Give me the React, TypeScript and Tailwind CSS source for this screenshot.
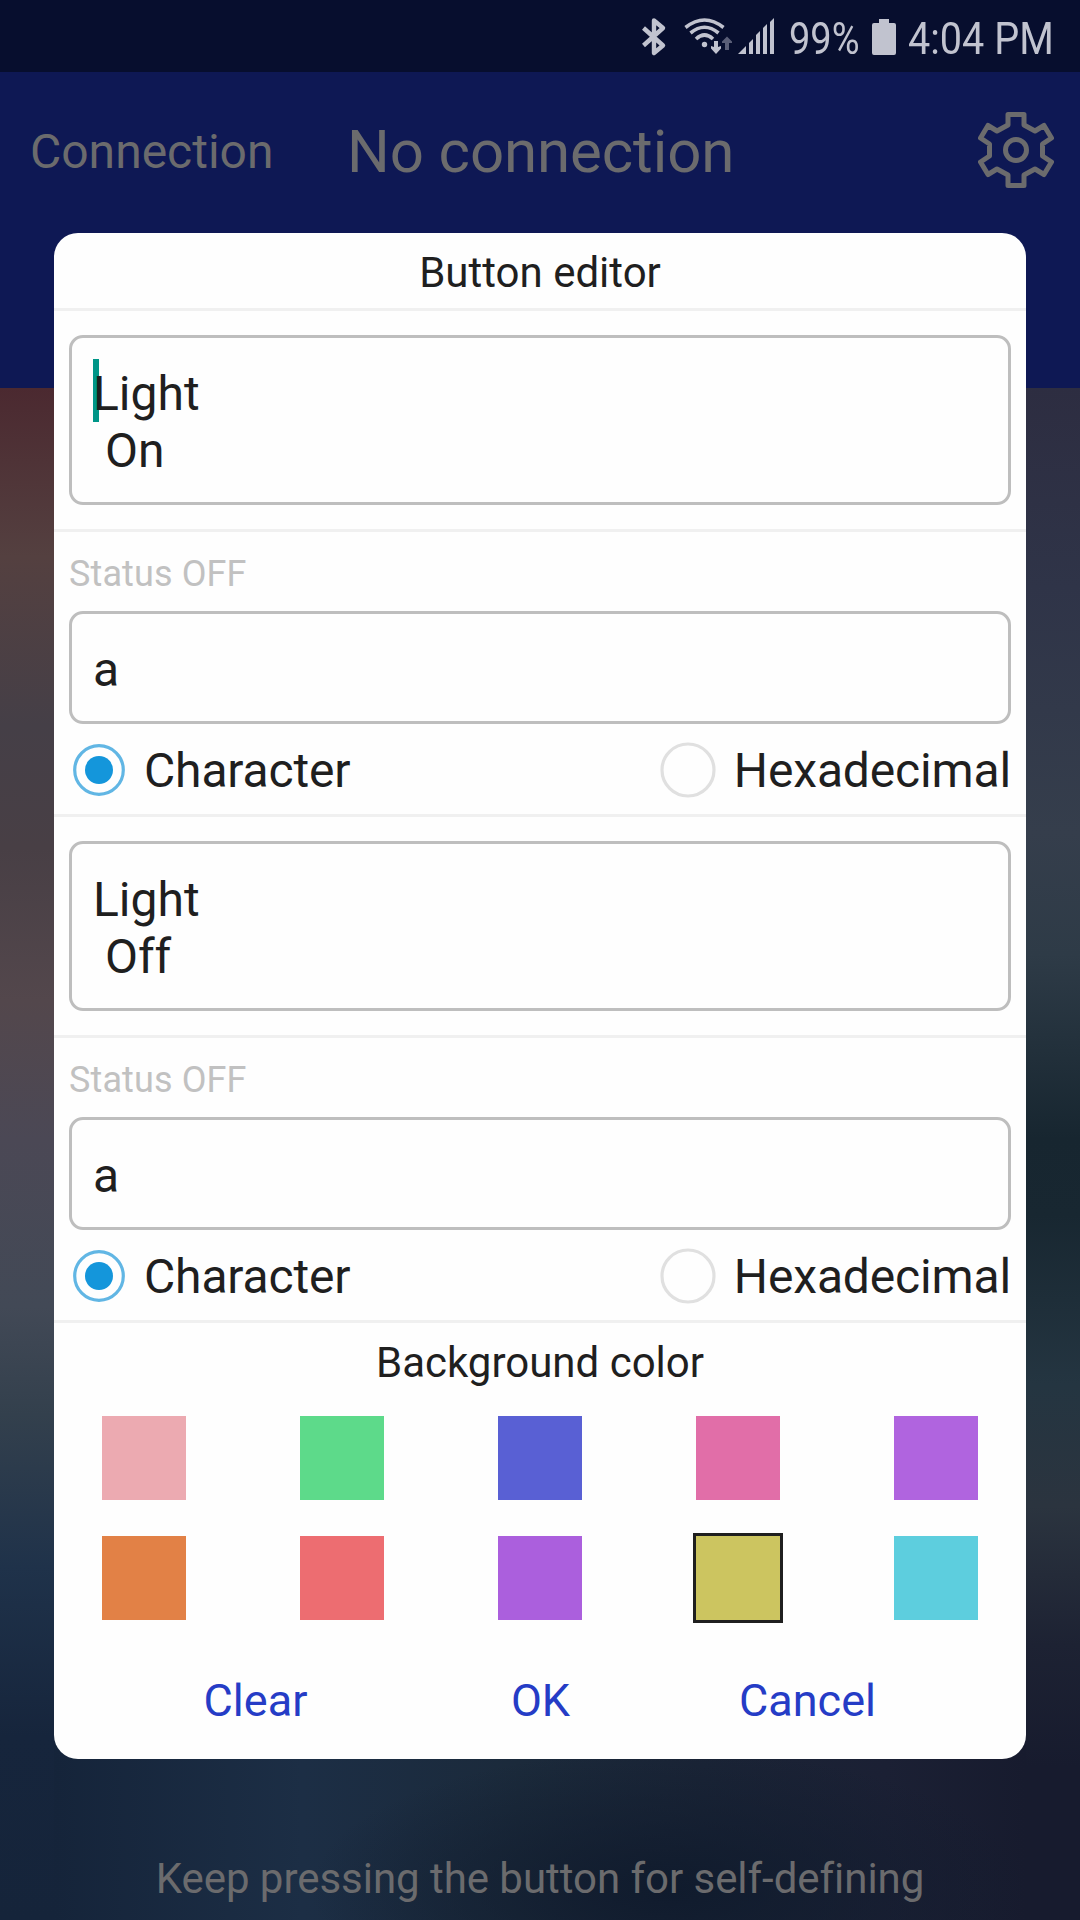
import React from "react";

function StatusBar() {
  return (
    <div className="flex h-[72px] items-start bg-[#070e2e] text-[#c1c3cf]">
      <svg className="ml-[640px] h-[72px] w-[145px] shrink-0" viewBox="640 0 145 72" fill="none" stroke="#c1c3cf">
        <path d="M643.5 28 L663 45.500 L654 53 V20.500 L663 28 L643.500 45.500" strokeWidth="4.400" strokeLinejoin="round" />
        <g strokeWidth="3.600">
          <path d="M685.500 27.500 Q704.500 12.500 723.500 27.500" />
          <path d="M690.500 33 Q704.500 21.500 718.500 33" />
          <path d="M696 39 Q704.500 31 713 39" />
        </g>
        <circle cx="704.500" cy="44.500" r="2.700" fill="#c1c3cf" stroke="none" />
        <path d="M714 41h4v6l3-1v2.500l-5 5.500l-5-5.500V46l3 1z" fill="#c1c3cf" stroke="none" />
        <path d="M725 50h4v-7h3v-1.500l-5-5l-5 5V43h3z" fill="#5b5f78" stroke="none" />
        <path d="M738 54l8-8v8zM749 54v-11l4-4v15zM756 54v-19l4-4v23zM763 54v-26l4-4v30zM770 54v-32l4-4v36z" fill="#c1c3cf" stroke="none" />
      </svg>
      <div className="ml-[4px] h-[72px] w-[83px] shrink-0">
        <span className="block origin-left scale-x-[0.845] text-[45px] leading-[78px] whitespace-nowrap">99%</span>
      </div>
      <svg className="mt-[19px] h-9 w-6 shrink-0" viewBox="0 0 24 36" fill="#c1c3cf">
        <path d="M7 0h10v4h5q2 0 2 2v28q0 2-2 2H2q-2 0-2-2V6q0-2 2-2h5z" />
      </svg>
      <div className="ml-[12px] h-[72px] w-[150px] shrink-0">
        <span className="block origin-left scale-x-[0.88] text-[45px] leading-[78px] whitespace-nowrap">4:04 PM</span>
      </div>
    </div>
  );
}

function Gear() {
  return (
    <svg className="h-[76px] w-[76px] blur-[0.7px]" viewBox="0 0 76 76" fill="none" stroke="#6b6b6d" strokeWidth="5" strokeLinejoin="round">
      <path d="M30 2.500H46V13L57 19L66 13.500L73.500 26L64.500 32V44L73.500 50L66 62.500L57 57L46 63V73.500H30V63L19 57L10 62.500L2.500 50L11.500 44V32L2.500 26L10 13.500L19 19L30 13Z" />
      <circle cx="38" cy="38" r="10.500" />
    </svg>
  );
}

function Radio({ checked, label }: { checked?: boolean; label: string }) {
  return (
    <div className="flex items-center">
      {checked ? (
        <svg className="ml-[3px] h-[54px] w-[54px]" viewBox="0 0 54 54">
          <circle cx="27" cy="27" r="24.300" fill="none" stroke="#61b6e4" strokeWidth="3.200" />
          <circle cx="27" cy="27" r="14" fill="#1496db" />
        </svg>
      ) : (
        <svg className="h-[56px] w-[56px]" viewBox="0 0 56 56">
          <circle cx="28" cy="28" r="26" fill="none" stroke="#e0e0e0" strokeWidth="3.200" />
        </svg>
      )}
      <span className="ml-[18px] pt-[2px] text-[48px] leading-[56px] tracking-[-0.15px]">{label}</span>
    </div>
  );
}

function Editor({ second, cursor }: { second: string; cursor?: boolean }) {
  return (
    <div className="h-[506px] border-b-3 border-[#f0f0f0]">
      <div className="h-[221px] border-b-3 border-[#f0f0f0] px-[15px] pt-6">
        <div className="relative h-[170px] rounded-[14px] border-3 border-[#bebebe] pt-[27px] pl-[21px] text-[48px] leading-[57px] whitespace-pre">
          {cursor && <div className="absolute top-[21px] left-[21px] h-[63px] w-[6px] bg-[#009688]" />}
          <div className="relative">Light</div>
          <div className="relative">{" " + second}</div>
        </div>
      </div>
      <div className="px-[15px]">
        <div className="h-[79px] pt-[21px] text-[36px] leading-[42px] tracking-[0.12px] text-[#c1c1c1]">Status OFF</div>
        <div className="h-[113px] rounded-[14px] border-3 border-[#bebebe] pt-[27px] pl-[21px] text-[48px] leading-[57px]">a</div>
        <div className="flex h-[90px] items-center justify-between pt-[1px]">
          <Radio checked label="Character" />
          <Radio label="Hexadecimal" />
        </div>
      </div>
    </div>
  );
}

function Swatch({ className }: { className: string }) {
  return <div className={"h-[84px] w-[84px] " + className} />;
}

export default function App() {
  return (
    <div className="relative flex h-[1920px] w-[1080px] flex-col overflow-hidden bg-[#16243a] font-[Roboto,sans-serif] text-[#1f1f1f]">
      <StatusBar />
      <div className="flex h-[316px] shrink-0 items-start bg-[#0e1854] text-[#6b6b6d]">
        <div className="mt-[52px] ml-[30px] w-[317px] text-[48px] leading-[56px]">Connection</div>
        <div className="mt-[45px] w-[631px] text-[60px] leading-[70px] tracking-[-0.1px]">No connection</div>
        <div className="mt-[40px]">
          <Gear />
        </div>
      </div>
      <div className="flex h-[1532px] shrink-0 items-end justify-center bg-[radial-gradient(360px_140px_at_62%_98%,#101b2d,transparent),linear-gradient(to_right,#15243a_5%,#1c2e45_28%,#1b2a3b_48%,#1a2436_65%,#1b2034_82%,#171b2e_95%)]">
        <div className="h-[1532px] w-[54px] shrink-0 bg-[linear-gradient(#4b2930,#544040_11%,#453f47_22%,#483f45_30%,#53474c_40%,#4b4855_49%,#424956_60%,#33404d_67%,#1f324a_77%,#16253c_88%,#15243a)]" />
        <div className="flex-1 pb-[17px] text-center text-[42px] leading-[49px] tracking-[-0.04px] text-[#6b6b6d]">Keep pressing the button for self-defining</div>
        <div className="h-[1532px] w-[54px] shrink-0 bg-[linear-gradient(#2d2d41,#2f3448_13%,#353e4c_29%,#2e3b47_37%,#172630_49%,#182731_54%,#243541_65%,#2b343f_73%,#1d2233_82%,#171b2e_90%)]" />
      </div>
      <div className="absolute top-[233px] left-[54px] flex h-[1526px] w-[972px] flex-col rounded-[24px] bg-[#fefefe]">
        <div className="h-[78px] shrink-0 border-b-3 border-[#f0f0f0] pt-[15px] text-center text-[42px] leading-[49px]">Button editor</div>
        <Editor second="On" cursor />
        <Editor second="Off" />
        <div className="pt-[15px] text-center text-[42px] leading-[49px]">Background color</div>
        <div className="mt-[29px] flex justify-between px-12">
          <Swatch className="bg-[#ecaab1]" />
          <Swatch className="bg-[#5dda8a]" />
          <Swatch className="bg-[#5960d4]" />
          <Swatch className="bg-[#e16ea8]" />
          <Swatch className="bg-[#b064df]" />
        </div>
        <div className="mt-9 flex justify-between px-12">
          <Swatch className="bg-[#e28146]" />
          <Swatch className="bg-[#ed6d71]" />
          <Swatch className="bg-[#ab5fdd]" />
          <Swatch className="bg-[#ccc560] outline-3 outline-[#1f1f1f]" />
          <Swatch className="bg-[#5dcede]" />
        </div>
        <div className="mt-[54px] grid grid-cols-[285px_285px_249px] pl-[59px] text-center text-[45px] leading-[53px] text-[#253cc6]">
          <div>Clear</div>
          <div>OK</div>
          <div>Cancel</div>
        </div>
      </div>
    </div>
  );
}
